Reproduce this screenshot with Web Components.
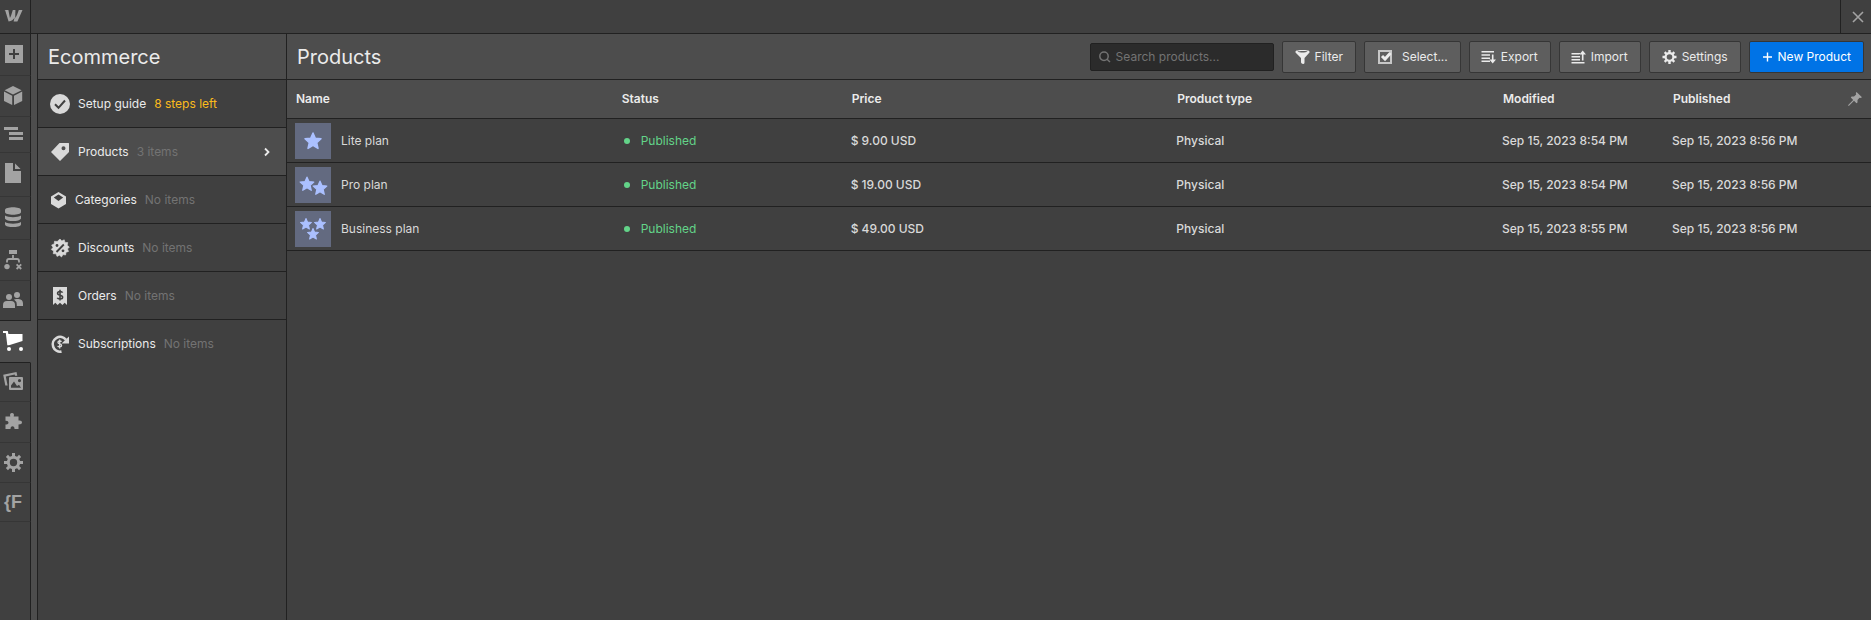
<!DOCTYPE html>
<html lang="en">
<head>
<meta charset="utf-8">
<title>Ecommerce – Products</title>
<style>
  html, body { margin: 0; }
  body {
    --bg: #404040; --raised: #4d4d4d; --line: #212121; --soft-line: #363636;
    --text: #ebebeb; --muted: #737373; --glyph: #a3a3a3;
    background: var(--bg); color: var(--text);
    font: 12px/16px Inter, "Liberation Sans", sans-serif;
  }
</style>
</head>
<body>
<shop-app></shop-app>
<script>
const ICONS = {
  logo: [20, 14, '<path d="M18.5 1 13.4 12.5H9.6L10.6 8.6C9.4 11 7.6 12.4 4.6 12.5L1.2 1.6 0.5 1H4.4L5.9 9C6.9 7.6 7.4 5.6 8.8 1H11.4L11.2 9C12.6 7.4 13.6 4.4 14.8 1Z"/>'],
  close: [12, 12, '<path d="M1 1 11 11M11 1 1 11" fill="none" stroke="currentColor" stroke-width="1.6"/>'],
  add: [20, 21, '<path fill-rule="evenodd" d="M1 1H19V19H1ZM9 5V9H5V11H9V15H11V11H15V9H11V5Z"/>'],
  cube: [20, 20, '<path d="M9 0 17.6 4.2 9 8.4 0.6 4.2ZM0 5.6 8.2 9.8V19L0 15ZM18.2 5.6 10 9.8V19L18.2 15Z"/>'],
  navigator: [20, 15, '<path d="M0 0H14V3H0ZM5 5H19V8H5ZM5 10H19V13H5Z"/>'],
  page: [20, 23, '<path d="M1 0H9V8H17V20H1ZM11 0.5 16.6 6H11Z"/>'],
  database: [20, 22, '<path d="M1 3C1-.8 17-.8 17 3V5C17 8.6 1 8.6 1 5ZM1 8.6C4 10.8 14 10.8 17 8.6V11.4C16 14.8 2 14.8 1 11.4ZM1 15C4 17.2 14 17.2 17 15V17.4C16 21 2 21 1 17.4Z"/>'],
  logic: [20, 20, '<path d="M5 0H13V4H5Z"/><path d="M9 5V9M3 12.5V11Q3 9 5 9H13Q15 9 15 11V12.5M12.6 14.4 17.2 19M17.2 14.4 12.6 19" fill="none" stroke="currentColor" stroke-width="1.8"/><circle cx="3" cy="16.6" r="2.7"/>'],
  users: [20, 19, '<circle cx="5" cy="6" r="3"/><circle cx="13" cy="4" r="3"/><path d="M-1 17V14Q-1 10 3 10H7Q11 10 11 14V17ZM10 8.6Q11 8 12.500 8H14.500Q19 8.300 19 12.500V15H12.800V13.500Q12.800 10.500 10 8.600Z"/>'],
  cart: [20, 21, '<path d="M-1 0H3.800L4.400 3H18.500V10L5 14.200H3.300L1.800 2H-1Z"/><circle cx="5" cy="18" r="2"/><circle cx="17" cy="18" r="2"/>'],
  images: [20, 18, '<path d="M-.8 1.800 12.500-1 13.300 2.800H11L10.700 1.600 1.800 3.600 3.600 12.500H1.300Z"/><path fill-rule="evenodd" d="M6 4H18Q19 4 19 5V16Q19 17 18 17H6Q5 17 5 16V5Q5 4 6 4ZM7 14.800H17L15 11.800 13 13 10 8.500 7 12.500ZM15.500 6A1.600 1.600 0 1 0 15.500 9.200 1.600 1.600 0 1 0 15.500 6Z"/>'],
  puzzle: [20, 20, '<path d="M1.500 4.500H6.300Q5.300 1 8 1 10.700 1 9.700 4.500H14.500V8.500Q18 8 18 10.300 18 12.500 14.500 12.500V17H10.500Q10.500 14.200 8.500 14.200 6.500 14.200 6.500 17H1.500V12.500Q4.500 12.500 4.500 10.500 4.500 8.500 1.500 8.700Z"/>'],
  gear: [20, 19, '<g transform="translate(9.500 9.500)"><path fill="none" stroke="currentColor" stroke-width="3" d="M0-9.500V-5M0 9.500V5M-9.500 0H-5M9.500 0H5M-6.600-6.600-4-4M6.600 6.600 4 4M-6.600 6.600-4 4M6.600-6.600 4-4"/><circle r="5.200" fill="none" stroke="currentColor" stroke-width="3"/></g>'],
  check: [20, 20, '<circle cx="10" cy="10" r="10"/><path d="M5 10.300 8.500 13.800 15 6.500" fill="none" stroke="#404040" stroke-width="2"/>'],
  tag: [20, 20, '<path fill-rule="evenodd" d="M1 10 9.500 1H18.500Q19 1 19 1.500V10L10 19ZM13.500 4.200A2 2 0 1 0 13.500 8.200 2 2 0 1 0 13.500 4.200Z"/>'],
  box: [17, 20, '<path fill-rule="evenodd" d="M8.500 2 16 6.500V14L8.500 18.500 1 14V6.500ZM8.500 4.500 3.800 7.600 8.500 11 13.200 7.600Z"/>'],
  discount: [20, 20, '<path d="M10 1 11.800 3 14.200 1.800 15 4.400 17.800 4.600 17.200 7.300 19.300 9 17.500 11 18.600 13.400 16 14.300 15.600 17 13 16.600 11.500 19 9.500 17.200 7 18.400 6 15.800 3.200 15.700 3.600 13 1.300 11.500 3 9.400 1.600 7 4.200 6 4.500 3.200 7.200 3.500Z" stroke="currentColor" stroke-width=".6"/><path d="M6.500 14 13.800 6.500" stroke="#404040" stroke-width="1.800"/><circle cx="7" cy="7.500" r="1.400" fill="#404040"/><circle cx="13" cy="12.800" r="1.400" fill="#404040"/>'],
  receipt: [20, 20, '<path d="M3 1H17V19L14.700 16.800 12.400 19 10 16.800 7.600 19 5.300 16.800 3 19Z"/><path d="M12.600 6.600Q12 5.500 10 5.500 7.600 5.500 7.600 7.200 7.600 8.700 10 9.200 12.600 9.700 12.600 11.300 12.600 13 10 13 7.800 13 7.300 11.700M10 3.800V14.600" fill="none" stroke="#404040" stroke-width="1.600"/>'],
  renew: [20, 20, '<path d="M11.500 17.600A7.400 7.400 0 1 1 16 5.800" fill="none" stroke="currentColor" stroke-width="2.600"/><path d="M19 2.500V9.500H11.500Z"/><path d="M11.600 7.700Q11 7 9.700 7 8 7 8 8.400 8 9.500 9.700 9.900 11.600 10.200 11.600 11.500 11.600 12.900 9.700 12.900 8.200 12.900 7.700 11.900M9.700 5.500V14.500" fill="none" stroke="currentColor" stroke-width="1.300"/>'],
  chevron: [6, 10, '<path d="M1 1.500 4.500 5 1 8.500" fill="none" stroke="currentColor" stroke-width="1.800"/>'],
  search: [11, 12, '<circle cx="5" cy="5.200" r="4.200" fill="none" stroke="currentColor" stroke-width="1.500"/><path d="M8 8.200 11 11" stroke="currentColor" stroke-width="1.500"/>'],
  filter: [15, 16, '<path fill-rule="evenodd" d="M.5 2.500C.5 .5 14.500 .5 14.500 2.500V3.500L9.500 9V13.500Q9.500 15 8 15 6.500 14.500 6 13.500V9L.5 3.500ZM2.500 2.700C4.500 3.700 10.500 3.700 12.500 2.700 10.500 1.900 4.500 1.900 2.500 2.700Z"/>'],
  select: [16, 16, '<path fill-rule="evenodd" opacity=".75" d="M1 1H15V15H1ZM3 3V13H13V3Z"/><path d="M5 7 8 10 13.500 4" fill="none" stroke="currentColor" stroke-width="3"/>'],
  export: [14, 16, '<path d="M-.5 2H12V3.500H-.5ZM-.5 5.200H8V6.700H-.5ZM-.5 8.400H8V9.900H-.5ZM-.5 11.500H8V13H-.5ZM9.900 5.500H11.500V10.500H14L10.700 14.500 7.400 10.500H9.900Z"/>'],
  import: [14, 16, '<path d="M-.5 13H12.500V14.500H-.5ZM-.5 10H8V11.500H-.5ZM-.5 7H8V8.500H-.5ZM-.5 4H8V5.500H-.5ZM9.900 11.500H11.500V5.500H14L10.700 1.500 7.400 5.500H9.900Z"/>'],
  settings: [15, 16, '<g transform="translate(7.500 8)"><path fill="none" stroke="currentColor" stroke-width="2.400" d="M0-7V-4M0 7V4M-7 0H-4M7 0H4M-4.800-4.800-3-3M4.800 4.800 3 3M-4.800 4.800-3 3M4.800-4.800 3-3"/><circle r="3.900" fill="none" stroke="currentColor" stroke-width="2.200"/></g>'],
  plus: [11, 16, '<path d="M5.500 3.500V12.500M1 8H10" stroke="currentColor" stroke-width="1.400"/>'],
  pin: [14, 14, '<path d="M8.500 0 14 5.300 12.500 6 11.500 5.800 9.500 8V10.500L8.500 11.300 6 8.700 .8 14 0 13.200 5.200 8 2.800 5.400 3.600 4.600H6L8.200 2.500 7.800 1Z"/>'],
};

const STAR = 'M0-8 2.300-2.800 8-2.300 3.700 1.600 5 7.400 0 4.400-5 7.400-3.700 1.600-8-2.300-2.300-2.800Z';
const STARS = {
  1: [[18, 18, 1]],
  2: [[12, 17, .85], [25, 21, .85]],
  3: [[11, 13, .68], [25, 13, .68], [18, 23, .68]],
};

class Base extends HTMLElement {
  connectedCallback() {
    if (this.shadowRoot) return;
    this.attachShadow({ mode: 'open' }).innerHTML =
      `<style>:host{display:block;box-sizing:border-box}${this.css()}</style>${this.html()}`;
  }
  css() { return ''; }
}
const attr = (el, name) => el.getAttribute(name) || '';

customElements.define('ui-icon', class extends Base {
  css() { return ':host{flex:none}svg{display:block;overflow:visible;fill:currentColor}'; }
  html() {
    const [w, h, shape] = ICONS[attr(this, 'name')];
    return `<svg width="${w}" height="${h}" viewBox="0 0 ${w} ${h}" aria-hidden="true">${shape}</svg>`;
  }
});

customElements.define('plan-thumb', class extends Base {
  css() { return ':host{width:36px;height:36px;background:#636a80}svg{display:block;fill:#abc0ff;stroke:#abc0ff;stroke-width:1.5;stroke-linejoin:round}'; }
  html() {
    return `<svg width="36" height="36" viewBox="0 0 36 36" aria-hidden="true">${STARS[attr(this, 'stars')]
      .map(([x, y, k]) => `<path d="${STAR}" transform="translate(${x} ${y}) scale(${k})"/>`).join('')}</svg>`;
  }
});

customElements.define('top-bar', class extends Base {
  css() { return `
    :host{display:flex;justify-content:space-between;height:34px;border-bottom:1px solid var(--line);color:var(--glyph)}
    button{appearance:none;background:none;border:0;margin:0;color:inherit;box-sizing:border-box;width:31px;display:flex;align-items:center;padding:0 0 0 4px}
    .home{border-right:1px solid var(--line);padding-bottom:2px}.close{border-left:1px solid var(--line);padding-left:11px}`; }
  html() { return `<button class="home" aria-label="Home"><ui-icon name="logo"></ui-icon></button>
    <button class="close" aria-label="Close"><ui-icon name="close"></ui-icon></button>`; }
});

customElements.define('rail-item', class extends Base {
  css() { return `
    button{appearance:none;display:block;width:100%;box-sizing:border-box;margin:0;border:0;border-right:1px solid var(--line);border-bottom:1px solid var(--soft-line);
      background:var(--bg);color:var(--glyph);padding:10px 0 10px 4px;text-align:left;font:bold 18px/18px "Liberation Sans",sans-serif}
    :host([before]) button{border-bottom-color:var(--line)}
    :host([current]) button{background:none;border-right-color:transparent;border-bottom-color:var(--line);color:#fff}`; }
  html() { return `<button aria-label="${attr(this, 'label')}"><slot></slot></button>`; }
});

customElements.define('tool-rail', class extends Base {
  css() { return `
    :host{display:flex;flex-direction:column;width:38px;flex:none;background:var(--raised);border-right:1px solid var(--line)}
    rail-item,.rest{width:31px}.rest{flex:1;box-sizing:border-box;background:var(--bg);border-right:1px solid var(--line)}`; }
  html() {
    const items = [['add', 'Add'], ['cube', 'Components'], ['navigator', 'Navigator'], ['page', 'Pages'], ['database', 'CMS'], ['logic', 'Logic'],
      ['users', 'Users', 'before'], ['cart', 'Ecommerce', 'current'], ['images', 'Assets'], ['puzzle', 'Apps'], ['gear', 'Settings']];
    return items.map(([icon, label, flag = '']) => `<rail-item label="${label}" ${flag}><ui-icon name="${icon}"></ui-icon></rail-item>`).join('')
      + '<rail-item label="Extension">{F</rail-item><div class="rest"></div>';
  }
});

customElements.define('panel-link', class extends Base {
  css() { return `
    a{display:flex;align-items:center;gap:8px;height:47px;padding:0 16px 0 12px;border-bottom:1px solid var(--line);color:var(--text);text-decoration:none}
    :host([last]) a{border-bottom:0}
    :host([current]) a{background:var(--raised)}
    .icon{color:#d9d9d9}.note{color:var(--muted)}:host([warn]) .note{color:#fbbb1c}
    .go{margin-left:auto}`; }
  html() { return `<a href="#"><ui-icon class="icon" name="${attr(this, 'icon')}"></ui-icon><span><slot></slot></span>
    <span class="note">${attr(this, 'note')}</span>${this.hasAttribute('current') ? '<ui-icon class="go" name="chevron"></ui-icon>' : ''}</a>`; }
});

customElements.define('panel-header', class extends Base {
  css() { return `
    :host{display:flex;align-items:center;gap:8px;height:46px;padding:0 7px 0 10px;background:var(--raised);border-bottom:1px solid var(--line)}
    h2{margin:0 auto 0 0;font-weight:400;font-size:20px;line-height:24px}`; }
  html() { return '<h2><slot></slot></h2><slot name="actions"></slot>'; }
});

customElements.define('side-panel', class extends Base {
  css() { return ':host{width:249px;flex:none;border-right:1px solid var(--line)}'; }
  html() { return `<panel-header>Ecommerce</panel-header><nav>
    <panel-link icon="check" note="8 steps left" warn>Setup guide</panel-link>
    <panel-link icon="tag" note="3 items" current>Products</panel-link>
    <panel-link icon="box" note="No items">Categories</panel-link>
    <panel-link icon="discount" note="No items">Discounts</panel-link>
    <panel-link icon="receipt" note="No items">Orders</panel-link>
    <panel-link icon="renew" note="No items" last>Subscriptions</panel-link></nav>`; }
});

customElements.define('search-box', class extends Base {
  css() { return `
    label{display:flex;align-items:center;gap:6px;box-sizing:border-box;width:184px;height:28px;padding:0 8px;background:#2b2b2b;border:1px solid var(--line);border-radius:2px;color:var(--muted)}
    input{appearance:none;flex:1;min-width:0;margin:0;padding:0;border:0;outline:0;background:none;color:var(--text);font:inherit}
    input::placeholder{color:var(--muted);opacity:1}`; }
  html() { return '<label><ui-icon name="search"></ui-icon><input type="search" aria-label="Search products" placeholder="Search products..."></label>'; }
});

customElements.define('tool-button', class extends Base {
  css() { return `
    button{appearance:none;display:flex;align-items:center;gap:5px;box-sizing:border-box;height:32px;margin:0;padding:0 12px;white-space:nowrap;
      background:#5e5e5e;border:1px solid var(--soft-line);border-radius:2px;color:var(--text);font:inherit}
    :host([wide]) button{gap:9px}
    :host([primary]) button{background:#0073e6;color:#fff}`; }
  html() { return `<button><ui-icon name="${attr(this, 'icon')}"></ui-icon><slot></slot></button>`; }
});

customElements.define('product-table', class extends Base {
  css() { return `
    table{width:100%;border-collapse:separate;border-spacing:0;table-layout:fixed}
    th,td{box-sizing:border-box;padding:0 8px;text-align:left;border-bottom:1px solid var(--line)}
    th{height:39px;background:var(--raised);font-weight:600;padding:0 9px}
    td{height:44px;font-weight:500;color:#d9d9d9}
    .status{width:230px}.mod{width:170px}.pub{width:207px}
    .head,.name,.state{display:flex;align-items:center}
    .head{justify-content:space-between}.head ui-icon{color:var(--glyph)}
    .name{gap:10px;font-weight:400}
    .state{gap:11px;padding-left:3px;font-weight:400;color:#63d489}
    .state::before{content:"";width:6px;height:6px;border-radius:50%;background:currentColor}`; }
  html() {
    const rows = [['Lite plan', 1, '9.00', '8:54'], ['Pro plan', 2, '19.00', '8:54'], ['Business plan', 3, '49.00', '8:55']];
    return `<table><thead><tr><th>Name</th><th class="status">Status</th><th>Price</th><th>Product type</th><th class="mod">Modified</th>
      <th class="pub"><div class="head">Published<ui-icon name="pin"></ui-icon></div></th></tr></thead><tbody>${rows.map(([name, stars, price, time]) => `<tr>
      <td><div class="name"><plan-thumb stars="${stars}"></plan-thumb>${name}</div></td><td><div class="state">Published</div></td>
      <td>$ ${price} USD</td><td>Physical</td><td>Sep 15, 2023 ${time} PM</td><td>Sep 15, 2023 8:56 PM</td></tr>`).join('')}</tbody></table>`;
  }
});

customElements.define('shop-app', class extends Base {
  css() { return `
    :host{display:flex;flex-direction:column;min-height:100vh}
    .body{display:flex;flex:1}main{flex:1;min-width:0}`; }
  html() { return `<top-bar></top-bar><div class="body"><tool-rail></tool-rail><side-panel></side-panel><main>
    <panel-header>Products
      <search-box slot="actions"></search-box>
      <tool-button slot="actions" icon="filter">Filter</tool-button>
      <tool-button slot="actions" icon="select" wide>Select...</tool-button>
      <tool-button slot="actions" icon="export">Export</tool-button>
      <tool-button slot="actions" icon="import">Import</tool-button>
      <tool-button slot="actions" icon="settings">Settings</tool-button>
      <tool-button slot="actions" icon="plus" primary>New Product</tool-button>
    </panel-header><product-table></product-table></main></div>`; }
});
</script>
</body>
</html>
